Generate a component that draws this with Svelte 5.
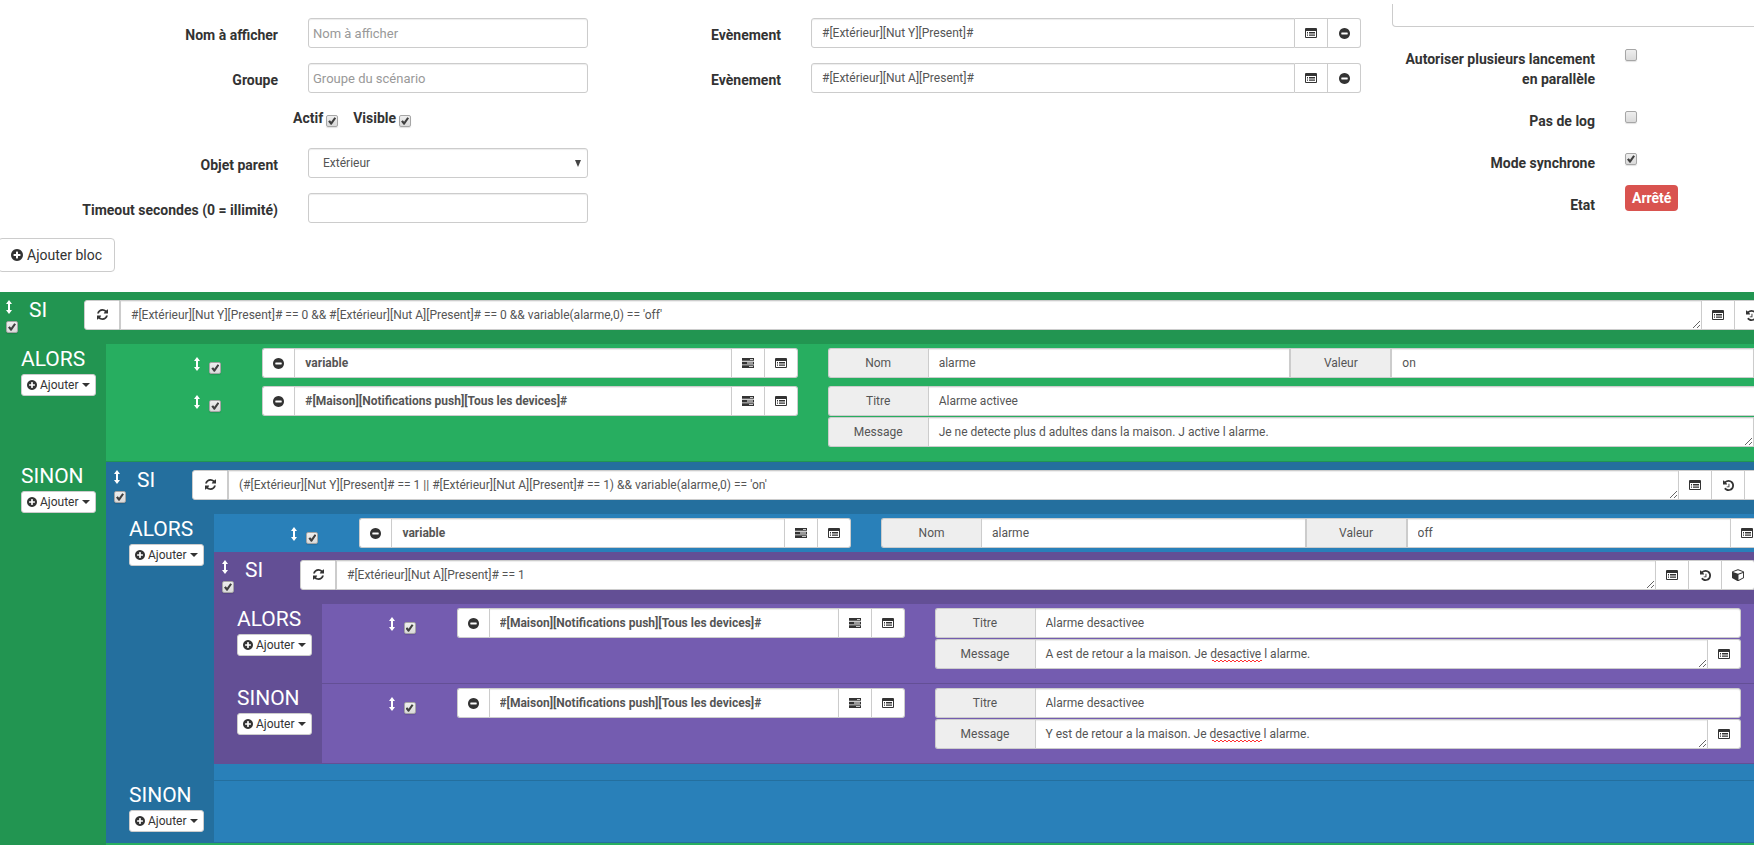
<script>
    const triggers = ['#[Extérieur][Nut Y][Present]#', '#[Extérieur][Nut A][Present]#'];

    const push = '#[Maison][Notifications push][Tous les devices]#';

    // condition blocks, nested through their "alors" / "sinon" branches
    const scenario = {
        id: 'b1',
        color: 'green',
        condition: "#[Extérieur][Nut Y][Present]# == 0 && #[Extérieur][Nut A][Present]# == 0 && variable(alarme,0) == 'off'",
        branches: [
            {
                name: 'ALORS',
                items: [
                    { id: 'a1', cmd: 'variable', nom: 'alarme', valeur: 'on' },
                    { id: 'a2', cmd: push, titre: 'Alarme activee', message: 'Je ne detecte plus d adultes dans la maison. J active l alarme.' }
                ]
            },
            {
                name: 'SINON',
                items: [
                    {
                        id: 'b2',
                        color: 'blue',
                        condition: "(#[Extérieur][Nut Y][Present]# == 1 || #[Extérieur][Nut A][Present]# == 1) && variable(alarme,0) == 'on'",
                        branches: [
                            {
                                name: 'ALORS',
                                items: [
                                    { id: 'a3', cmd: 'variable', nom: 'alarme', valeur: 'off' },
                                    {
                                        id: 'b3',
                                        color: 'purple',
                                        condition: '#[Extérieur][Nut A][Present]# == 1',
                                        branches: [
                                            {
                                                name: 'ALORS',
                                                items: [{ id: 'a4', cmd: push, titre: 'Alarme desactivee', message: 'A est de retour a la maison. Je desactive l alarme.', typo: true }]
                                            },
                                            {
                                                name: 'SINON',
                                                items: [{ id: 'a5', cmd: push, titre: 'Alarme desactivee', message: 'Y est de retour a la maison. Je desactive l alarme.', typo: true }]
                                            }
                                        ]
                                    }
                                ]
                            },
                            { name: 'SINON', items: [] }
                        ]
                    }
                ]
            }
        ]
    };
</script>

{#snippet icon(name)}
    {#if name === 'minus'}
        <svg class="icon" width="11" height="11" viewBox="0 0 1536 1536"><path d="M1216 832V704q0-26-19-45t-45-19H384q-26 0-45 19t-19 45v128q0 26 19 45t45 19h768q26 0 45-19t19-45zm320-64q0 209-103 385.5T1153.5 1433 768 1536t-385.5-103T103 1153.5 0 768t103-385.5T382.5 103 768 0t385.5 103T1433 382.5 1536 768z" /></svg>
    {:else if name === 'plus'}
        <svg class="icon plus" viewBox="0 0 1536 1536"><path d="M1216 832V704q0-26-19-45t-45-19H896V384q0-26-19-45t-45-19H704q-26 0-45 19t-19 45v256H384q-26 0-45 19t-19 45v128q0 26 19 45t45 19h256v256q0 26 19 45t45 19h128q26 0 45-19t19-45V896h256q26 0 45-19t19-45zm320-64q0 209-103 385.5T1153.5 1433 768 1536t-385.5-103T103 1153.5 0 768t103-385.5T382.5 103 768 0t385.5 103T1433 382.5 1536 768z" /></svg>
    {:else if name === 'move'}
        <svg class="icon" width="6" height="14" viewBox="0 0 6 14"><path d="M3 0l3 4H4v6h2l-3 4-3-4h2V4H0z" /></svg>
    {:else if name === 'refresh'}
        <svg class="icon" width="11" height="11" viewBox="0 0 1536 1536"><path d="M1511 928q0 5-1 7-64 268-268 434.500T764 1536q-146 0-282.500-55T238 1324l-129 129q-19 19-45 19t-45-19-19-45V960q0-26 19-45t45-19h448q26 0 45 19t19 45-19 45l-137 137q71 66 161 102t187 36q134 0 250-65t186-179q11-17 53-117 8-23 30-23h192q13 0 22.500 9.500t9.500 22.500zm25-800v448q0 26-19 45t-45 19h-448q-26 0-45-19t-19-45 19-45l138-138Q969 256 768 256q-134 0-250 65T332 500q-11 17-53 117-8 23-30 23H50q-13 0-22.500-9.500T18 608v-7q65-268 270-434.500T768 0q146 0 284 55.500T1297 212l130-129q19-19 45-19t45 19 19 45z" /></svg>
    {:else if name === 'list'}
        <svg class="icon" width="12" height="10" viewBox="0 0 12 10">
            <path fill-rule="evenodd" d="M1 0h10a1 1 0 0 1 1 1v8a1 1 0 0 1-1 1H1a1 1 0 0 1-1-1V1a1 1 0 0 1 1-1zM1 3v6h10V3z" />
            <path d="M2 4h1v.9H2zM4 4h6v.9H4zM2 5.600h1v.9H2zM4 5.600h6v.9H4zM2 7.200h1v.9H2zM4 7.200h6v.9H4z" />
        </svg>
    {:else if name === 'tasks'}
        <svg class="icon" width="12" height="10" viewBox="0 0 12 10">
            <path fill-rule="evenodd" d="M0 0h12v2.700H0zM8 .9v.9h3V.9zM0 3.700h12v2.700H0zM5 4.600v.9h6v-.9zM0 7.300h12V10H0zM7 8.200v.9h4v-.9z" />
        </svg>
    {:else if name === 'history'}
        <svg class="icon" width="11" height="11" viewBox="0 0 1536 1536"><path d="M1536 768q0 156-61 298t-164 245-245 164-298 61q-172 0-327-72.500T177 1259q-7-10-6.500-22.500t8.500-20.500l137-138q10-9 25-9 16 2 23 12 73 95 179 147t225 52q104 0 198.500-40.500T1130 1130t109.500-163.500T1280 768t-40.500-198.500T1130 406 966.500 296.500 768 256q-98 0-188 35.500T420 393l137 138q31 30 14 69-17 40-59 40H64q-26 0-45-19T0 576V128q0-42 40-59 39-17 69 14l130 129Q346 111 483.500 55.500T768 0q156 0 298 61t245 164 164 245 61 298zM896 544v448q0 14-9 23t-23 9H544q-14 0-23-9t-9-23v-64q0-14 9-23t23-9h224V544q0-14 9-23t23-9h64q14 0 23 9t9 23z" /></svg>
    {:else if name === 'cube'}
        <svg class="icon" width="12" height="12" viewBox="0 96 1664 1664"><path fill-rule="evenodd" d="M896 1629l640-349V644l-640 233v752zm-64-865l698-254-698-254-698 254zm832-252v768q0 35-18 65t-49 47l-704 384q-28 16-61 16t-61-16L67 1392q-31-17-49-47t-18-65V512q0-40 23-73t61-47l704-256q22-8 44-8t44 8l704 256q38 14 61 47t23 73z" /></svg>
    {/if}
{/snippet}

{#snippet action(item)}
    <div class="action">
        <div class="handle">
            {@render icon('move')}
            <input type="checkbox" checked aria-label="Activer l'action" />
        </div>
        <div class="col">
            <div class="group">
                <button class="addon" aria-label="Supprimer">{@render icon('minus')}</button>
                <input class="bold" type="text" value={item.cmd} aria-label="Commande" />
                <button class="addon" aria-label="Sélectionner un mot-clé">{@render icon('tasks')}</button>
                <button class="addon" aria-label="Sélectionner une commande">{@render icon('list')}</button>
            </div>
        </div>
        <div class="col options">
            {#if item.nom}
                <div class="group">
                    <label class="addon name" for="{item.id}-nom">Nom</label>
                    <input type="text" id="{item.id}-nom" value={item.nom} />
                    <label class="addon name middle" for="{item.id}-valeur">Valeur</label>
                    <input type="text" id="{item.id}-valeur" value={item.valeur} />
                    <button class="addon" aria-label="Sélectionner une commande">{@render icon('list')}</button>
                </div>
            {:else}
                <div class="group">
                    <label class="addon name" for="{item.id}-titre">Titre</label>
                    <input type="text" id="{item.id}-titre" value={item.titre} />
                </div>
                <div class="group">
                    <label class="addon name" for="{item.id}-message">Message</label>
                    <div class="message">
                        <textarea rows="1" id="{item.id}-message" value={item.message}></textarea>
                        {#if item.typo}<span class="squiggle"></span>{/if}
                    </div>
                    <button class="addon" aria-label="Sélectionner une commande">{@render icon('list')}</button>
                </div>
            {/if}
        </div>
    </div>
{/snippet}

{#snippet block(b)}
    <section class="block {b.color}">
        <div class="head">
            <div class="sort">
                {@render icon('move')}
                <input type="checkbox" checked aria-label="Activer le bloc" />
            </div>
            <span class="legend">SI</span>
            <div class="group">
                <button class="refresh" aria-label="Répéter">{@render icon('refresh')}</button>
                <textarea rows="1" value={b.condition} aria-label="Condition"></textarea>
                <button class="addon" aria-label="Sélectionner une commande">{@render icon('list')}</button>
                <button class="addon" aria-label="Historique">{@render icon('history')}</button>
                <button class="addon" aria-label="Sélectionner un objet">{@render icon('cube')}</button>
            </div>
        </div>
        {#each b.branches as branch}
            <div class="branch">
                <div class="side">
                    <span class="legend">{branch.name}</span>
                    <button class="add">
                        {@render icon('plus')} Ajouter
                        <svg class="caret" width="8" height="4" viewBox="0 0 8 4"><path d="M0 0h8L4 4z" /></svg>
                    </button>
                </div>
                <div class="body">
                    {#each branch.items as item}
                        {#if item.branches}
                            {@render block(item)}
                        {:else}
                            {@render action(item)}
                        {/if}
                    {/each}
                </div>
            </div>
        {/each}
    </section>
{/snippet}

<main>
    <div class="form">
        <div class="left">
            <div class="row">
                <label for="nom">Nom à afficher</label>
                <div class="field"><input class="plain" type="text" id="nom" placeholder="Nom à afficher" /></div>
            </div>
            <div class="row">
                <label for="groupe">Groupe</label>
                <div class="field"><input class="plain" type="text" id="groupe" placeholder="Groupe du scénario" /></div>
            </div>
            <div class="row">
                <span></span>
                <div class="flags">
                    <label for="actif">Actif</label><input type="checkbox" id="actif" checked />
                    <label for="visible">Visible</label><input type="checkbox" id="visible" checked />
                </div>
            </div>
            <div class="row">
                <label for="objet">Objet parent</label>
                <div class="field">
                    <select id="objet"><option>Extérieur</option></select>
                    <svg class="arrow" width="6" height="7" viewBox="0 0 6 7"><path d="M0 0h6L3 7z" /></svg>
                </div>
            </div>
            <div class="row">
                <label for="timeout">Timeout secondes (0 = illimité)</label>
                <div class="field"><input type="text" id="timeout" /></div>
            </div>
        </div>

        <div class="events">
            {#each triggers as trigger, i}
                <div class="row">
                    <label for="event-{i}">Evènement</label>
                    <div class="field group">
                        <input type="text" id="event-{i}" value={trigger} />
                        <button class="addon" aria-label="Sélectionner une commande">{@render icon('list')}</button>
                        <button class="addon" aria-label="Supprimer">{@render icon('minus')}</button>
                    </div>
                </div>
            {/each}
        </div>

        <div class="right">
            <textarea class="description" aria-label="Description"></textarea>
            <div class="row">
                <label for="parallele">Autoriser plusieurs lancement en parallèle</label>
                <div class="field"><input type="checkbox" id="parallele" /></div>
            </div>
            <div class="row">
                <label for="log">Pas de log</label>
                <div class="field"><input type="checkbox" id="log" /></div>
            </div>
            <div class="row">
                <label for="synchrone">Mode synchrone</label>
                <div class="field"><input type="checkbox" id="synchrone" checked /></div>
            </div>
            <div class="row">
                <span class="title">Etat</span>
                <div class="field"><span class="state">Arrêté</span></div>
            </div>
        </div>
    </div>

    <button class="add-block">{@render icon('plus')} Ajouter bloc</button>

    <div class="scenario">
        {@render block(scenario)}
    </div>
</main>

<style>
    :global(body) {
        margin: 0;
        background: #fff;
    }

    main {
        height: 100vh;
        overflow: hidden;
        font-family: Roboto, sans-serif;
        font-size: 14px;
        line-height: 20px;
        color: #333;
    }

    main * {
        box-sizing: border-box;
    }

    button, input, select, textarea {
        font-family: inherit;
        margin: 0;
    }

    input[type='text'], select, textarea {
        display: block;
        width: 100%;
        height: 30px;
        padding: 5px 10px;
        font-size: 12px;
        line-height: 18px;
        color: #555;
        background: #fff;
        border: 1px solid #ccc;
        border-radius: 3px;
        box-shadow: inset 0 1px 1px rgba(0, 0, 0, 0.075);
        outline: none;
    }

    input[type='text'].plain {
        padding: 5px 4px;
        font-size: 13px;
    }

    input.bold {
        font-weight: 700;
    }

    input::placeholder {
        color: #999;
    }

    textarea {
        overflow: hidden;
    }

    select {
        appearance: none;
        padding: 5px 14px;
    }

    input[type='checkbox'] {
        appearance: none;
        flex: none;
        position: relative;
        display: block;
        width: 12px;
        height: 12px;
        border: 1px solid #a6a6a6;
        border-radius: 2px;
        background: linear-gradient(#eee, #dadada);
        box-shadow: 0 1px 1px rgba(0, 0, 0, 0.12);
    }

    input[type='checkbox']:checked::after {
        content: '';
        position: absolute;
        inset: 1px;
        background: #404040;
        clip-path: polygon(0 55%, 22% 40%, 38% 60%, 78% 2%, 100% 16%, 44% 98%, 32% 98%);
    }

    .icon {
        flex: none;
        display: block;
        fill: currentColor;
    }

    /* top form */
    .form {
        display: grid;
        grid-template-columns: minmax(0, 603fr) minmax(0, 773fr) minmax(0, 378fr);
        align-items: start;
    }

    .left, .events {
        padding-top: 18px;
    }

    .right {
        padding-top: 4px;
    }

    .row {
        display: grid;
        margin-bottom: 15px;
    }

    .left .row {
        grid-template-columns: 293fr 310fr;
    }

    .events .row {
        grid-template-columns: 193fr 580fr;
    }

    .right .row {
        grid-template-columns: 234fr 144fr;
    }

    .row > label, .title {
        padding: 7px 15px 0;
        font-weight: 700;
        text-align: right;
    }

    .field {
        position: relative;
        min-width: 0;
        margin: 0 15px;
    }

    .arrow {
        position: absolute;
        top: 12px;
        right: 7px;
        fill: #444;
        pointer-events: none;
    }

    .flags {
        display: flex;
        height: 25px;
        font-weight: 700;
    }

    .flags input {
        margin: 7px 15px 0 3px;
    }

    .description {
        width: 100%;
        height: 23px;
        margin: 0 0 15px 16px;
        border-top: 0;
        border-radius: 0 0 4px 4px;
        box-shadow: none;
        resize: none;
    }

    .right .field input {
        margin-top: 7px;
    }

    .state {
        display: inline-block;
        margin-top: -3px;
        padding: 3px 7px;
        font-weight: 700;
        color: #fff;
        background: #d9534f;
        border-radius: 4px;
    }

    .right .row:last-child {
        height: 27px;
    }

    .add-block {
        display: flex;
        align-items: center;
        gap: 4px;
        height: 34px;
        margin: 0 0 20px -2px;
        padding: 0 12px;
        font-size: 14px;
        color: #333;
        background: #fff;
        border: 1px solid #ccc;
        border-radius: 4px;
    }

    .add-block :global(.plus) {
        width: 12px;
        height: 12px;
    }

    /* input groups */
    .group {
        display: flex;
    }

    .group input, .group > textarea {
        flex: 1;
        min-width: 0;
        width: 0;
    }

    .group > :not(:first-child), .group textarea {
        border-top-left-radius: 0;
        border-bottom-left-radius: 0;
    }

    .group > :not(:last-child), .group textarea {
        border-top-right-radius: 0;
        border-bottom-right-radius: 0;
    }

    .addon, .refresh {
        flex: none;
        display: flex;
        align-items: center;
        justify-content: center;
        width: 33px;
        height: 30px;
        padding: 0;
        font-size: 12px;
        color: #333;
        background: #fff;
        border: 1px solid #ccc;
        border-radius: 3px;
    }

    .addon:first-child {
        width: 32px;
        border-right: 0;
    }

    .addon:not(:first-child) {
        border-left: 0;
    }

    .addon.name {
        width: 100px;
        color: #555;
        background: #eee;
    }

    .addon.middle {
        width: 101px;
        border-left: 1px solid #ccc;
    }

    .refresh {
        width: 36px;
        padding-bottom: 2px;
    }

    .message {
        position: relative;
        flex: 1;
    }

    .squiggle {
        position: absolute;
        left: 177px;
        top: 21px;
        width: 50px;
        height: 2px;
        background:
            repeating-linear-gradient(90deg, #f33 0 2px, transparent 2px 4px) 0 0 / 100% 1px no-repeat,
            repeating-linear-gradient(90deg, transparent 0 2px, #f33 2px 4px) 0 1px / 100% 1px no-repeat;
        pointer-events: none;
    }

    /* blocks run past the right edge of the window */
    .scenario {
        margin: 0 -71px 0 -2px;
    }

    .block {
        padding-bottom: 1px;
        background: var(--strong);
    }

    .green {
        --strong: #229551;
        --light: #27ae60;
    }

    .blue {
        --strong: #246f9e;
        --light: #2980b9;
    }

    .purple {
        --strong: #634f95;
        --light: #745cb0;
    }

    .head {
        display: grid;
        grid-template-columns: 23px 55px 1fr;
        padding: 8px 24px 11px 8px;
        color: #fff;
    }

    .sort {
        display: flex;
        flex-direction: column;
        align-items: flex-start;
        gap: 7px;
    }

    .legend {
        font-size: 21px;
        line-height: 20px;
        color: #fff;
    }

    .branch {
        display: grid;
        grid-template-columns: 108px 1fr;
        padding-right: 23px;
    }

    .branch + .branch > .body {
        border-top: 1px solid var(--strong);
    }

    .side {
        display: flex;
        flex-direction: column;
        align-items: flex-start;
        padding: 0 0 10px 23px;
    }

    .side .legend {
        line-height: 30px;
    }

    .add {
        display: flex;
        align-items: center;
        gap: 3px;
        height: 22px;
        padding: 0 5px;
        font-size: 12px;
        line-height: 18px;
        color: #333;
        background: #fff;
        border: 1px solid #ccc;
        border-radius: 3px;
    }

    .add :global(.plus) {
        width: 10px;
        height: 10px;
    }

    .caret {
        fill: #333;
    }

    .body {
        min-width: 0;
        padding-bottom: 10px;
        background: var(--light);
    }

    .body .block {
        margin-bottom: 6px;
    }

    .action {
        display: grid;
        grid-template-columns: minmax(0, 1fr) minmax(0, 4fr) minmax(0, 7fr);
        padding: 4px 0;
    }

    .handle {
        display: flex;
        align-items: flex-start;
        justify-content: flex-end;
        gap: 9px;
        padding: 9px 26px 0 0;
        color: #fff;
    }

    .handle input {
        margin-top: 5px;
    }

    .col {
        padding: 0 15px;
    }

    .options {
        display: flex;
        flex-direction: column;
        gap: 1px;
    }
</style>
